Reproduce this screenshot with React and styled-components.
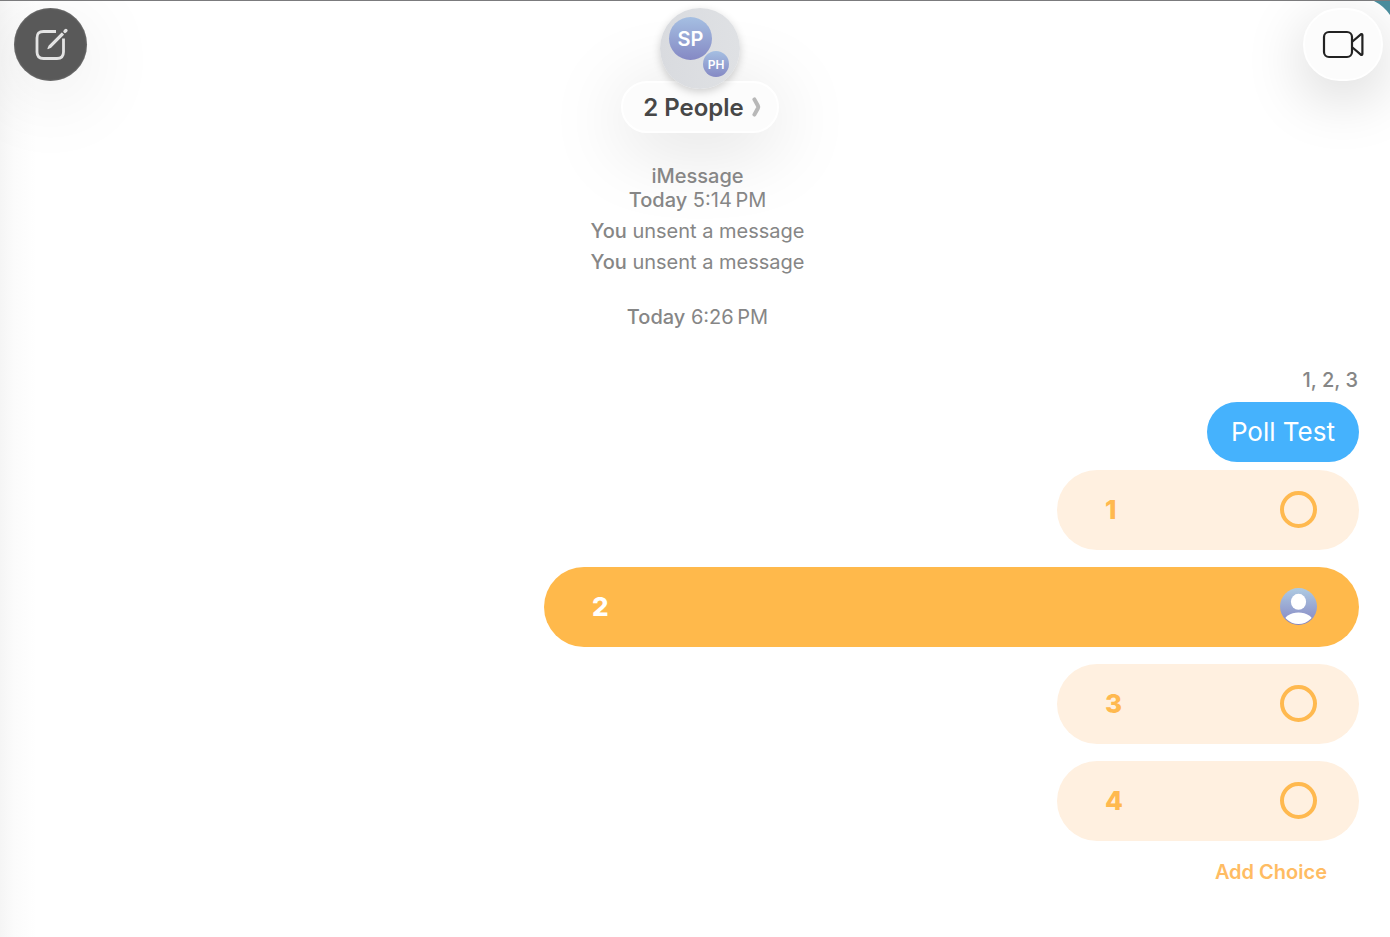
import { useState } from "react";
import styled, { createGlobalStyle } from "styled-components";

const GlobalStyle = createGlobalStyle`
  * {
    box-sizing: border-box;
  }

  body {
    margin: 0;
    background-color: #fff;
    font-family: Inter, "Liberation Sans", sans-serif;
  }

  button {
    font-family: inherit;
    border: none;
    padding: 0;
    cursor: pointer;
  }
`;

const Window = styled.div`
  position: relative;
  min-height: 100vh;
  overflow: hidden;
  border-top: 1px solid #7b7b7d;
  background: linear-gradient(to right, #f5f5f5, #fbfbfb 14px, #fff 36px);
`;

const Corner = styled.svg`
  position: absolute;
  top: 0;
  right: 0;
`;

const Header = styled.header`
  display: grid;
  grid-template-columns: 1fr auto 1fr;
  align-items: start;
  padding: 7px 4px 0 14px;
`;

const ComposeButton = styled.button`
  display: flex;
  justify-content: center;
  align-items: center;
  width: 73px;
  height: 73px;
  border-radius: 50%;
  background-color: #595959;
  box-shadow: inset 0 0 2px #8a8a8a, 0 16px 80px rgba(0, 0, 0, 0.1);
`;

const VideoButton = styled.button`
  display: flex;
  justify-content: center;
  align-items: center;
  justify-self: end;
  width: 80px;
  height: 73px;
  margin-right: 3px;
  border: 2px solid #fff;
  border-radius: 37px;
  background-color: #fcfcfc;
  box-shadow: 0 16px 60px rgba(0, 0, 0, 0.17);
`;

const Group = styled.div`
  display: flex;
  flex-direction: column;
  align-items: center;
`;

const GroupAvatar = styled.div`
  position: relative;
  z-index: 1;
  width: 80px;
  height: 81px;
  margin-bottom: -8px;
  border-radius: 50%;
  background: linear-gradient(to right, #d9dbdf, #dfe1e4);
  box-shadow: 0 3px 8px rgba(0, 0, 0, 0.18);
`;

const Initials = styled.span`
  position: absolute;
  top: ${({ $top }) => $top}px;
  left: ${({ $left }) => $left}px;
  display: flex;
  justify-content: center;
  align-items: center;
  width: ${({ $size }) => $size}px;
  height: ${({ $size }) => $size}px;
  border-radius: 50%;
  background: linear-gradient(#a5bfe2, #8589c4);
  color: #fff;
  font-size: ${({ $font }) => $font}px;
  font-weight: 600;
`;

const GroupName = styled.button`
  display: flex;
  justify-content: center;
  align-items: center;
  gap: 8px;
  height: 52px;
  padding: 0 16px 0 20px;
  border: 2px solid #fff;
  border-radius: 26px;
  background-color: #fcfcfc;
  box-shadow: 0 12px 80px rgba(0, 0, 0, 0.15);
  color: #474747;
  font-size: 24px;
  font-weight: 600;
`;

const Thread = styled.main`
  display: flex;
  flex-direction: column;
  align-items: flex-end;
  padding: 31px 31px 40px 36px;
`;

const Notice = styled.p`
  align-self: center;
  margin: ${({ $space }) => $space || 0}px 0 0;
  color: #868686;
  font-size: 20px;
  line-height: 24px;
  text-align: center;

  strong {
    font-weight: 500;
  }
`;

const Recipients = styled.p`
  margin: 39px 1px 0;
  color: #868686;
  font-size: 20px;
  font-weight: 500;
  line-height: 24px;
`;

const Bubble = styled.p`
  margin: 10px 0 0;
  padding: 0 24px;
  border-radius: 30px;
  background-color: #45b2fd;
  color: #fff;
  font-size: 26px;
  line-height: 60px;
`;

const Poll = styled.form`
  display: flex;
  flex-direction: column;
  align-items: flex-end;
  gap: 17px;
  width: 100%;
  margin-top: 8px;
`;

const Choice = styled.label`
  display: flex;
  justify-content: space-between;
  align-items: center;
  width: ${({ $checked }) => ($checked ? 815 : 302)}px;
  max-width: 100%;
  height: 80px;
  padding: 0 42px 1px 48px;
  border-radius: 40px;
  background-color: ${({ $checked }) => ($checked ? "#ffb94b" : "#fff0e0")};
  color: ${({ $checked }) => ($checked ? "#fff" : "#ffb94f")};
  font-size: 26px;
  font-weight: 800;
  cursor: pointer;
`;

const Mark = styled.span`
  display: grid;
  width: 37px;
  height: 37px;

  > * {
    grid-area: 1 / 1;
  }
`;

const Radio = styled.input`
  appearance: none;
  width: 37px;
  height: 37px;
  margin: 0;
  border: 4px solid #ffb94f;
  border-radius: 50%;
  cursor: pointer;

  &:checked {
    border: none;
  }
`;

const AddChoice = styled.button`
  margin: 19px 32px 0;
  background: none;
  color: #ffbc63;
  font-size: 20px;
  font-weight: 600;
  line-height: 24px;
`;

function ComposeIcon() {
  return (
    <svg width="36" height="36" viewBox="0 0 36 36" fill="none">
      <path
        d="M23 4.500H10.500C6 4.500 4 6.500 4 11V25C4 29.500 6 31.500 10.500 31.500H24C28.500 31.500 30.500 29.500 30.500 25V11.500"
        stroke="#e4e4e4"
        strokeWidth="2.800"
      />
      <path
        d="M15 21.500L16.400 18.600L28.800 6.200L30.300 7.700L17.900 20.100Z"
        fill="#e4e4e4"
        stroke="#e4e4e4"
        strokeWidth="1.200"
        strokeLinejoin="round"
      />
      <path
        d="M32 4.400L32.900 3.500"
        stroke="#e4e4e4"
        strokeWidth="3.400"
        strokeLinecap="round"
      />
    </svg>
  );
}

function VideoIcon() {
  return (
    <svg width="42" height="30" viewBox="0 0 42 30" fill="none">
      <g stroke="#222" strokeWidth="2.200" strokeLinejoin="round">
        <rect x="2" y="2" width="28" height="25" rx="5" />
        <path d="M30.500 11.500L38.800 4.300Q40.400 3.400 40.400 5.300V23.700Q40.400 25.600 38.800 24.700L30.500 17.500" />
      </g>
    </svg>
  );
}

function ChevronIcon() {
  return (
    <svg width="9" height="20" viewBox="0 0 9 20" fill="none">
      <path
        d="M2.400 2.400L5.900 8.800Q6.500 10 5.900 11.200L2.400 17.600"
        stroke="#b8b8b8"
        strokeWidth="4"
        strokeLinecap="round"
      />
    </svg>
  );
}

function PersonIcon() {
  return (
    <svg width="37" height="37" viewBox="0 0 37 37">
      <defs>
        <linearGradient id="person" x1="0" y1="0" x2="0" y2="1">
          <stop offset="0" stopColor="#aecbe2" />
          <stop offset="1" stopColor="#8585c3" />
        </linearGradient>
        <clipPath id="personClip">
          <circle cx="18.500" cy="18.500" r="17.500" />
        </clipPath>
      </defs>
      <circle cx="18.500" cy="18.500" r="18.500" fill="url(#person)" />
      <ellipse cx="18.500" cy="13.800" rx="7.600" ry="8" fill="#fff" />
      <ellipse
        cx="18.500"
        cy="35"
        rx="15"
        ry="10.500"
        fill="#fff"
        clipPath="url(#personClip)"
      />
    </svg>
  );
}

const choices = ["1", "2", "3", "4"];

function App() {
  const [vote, setVote] = useState("2");

  return (
    <>
      <GlobalStyle />
      <Window>
        <Corner width="16" height="15" viewBox="0 0 16 15" aria-hidden="true">
          <path d="M0 0Q10 5 16 14V0Z" fill="#4a8c9c" />
        </Corner>
        <Header>
          <ComposeButton type="button" aria-label="New message">
            <ComposeIcon />
          </ComposeButton>
          <Group>
            <GroupAvatar>
              <Initials $top={9} $left={9} $size={43} $font={20}>
                SP
              </Initials>
              <Initials $top={43} $left={43} $size={26} $font={12}>
                PH
              </Initials>
            </GroupAvatar>
            <GroupName type="button">
              2 People
              <ChevronIcon />
            </GroupName>
          </Group>
          <VideoButton type="button" aria-label="Start video call">
            <VideoIcon />
          </VideoButton>
        </Header>
        <Thread>
          <Notice>
            <strong>iMessage</strong>
            <br />
            <strong>Today</strong> 5:14{"\u202f"}PM
          </Notice>
          <Notice $space={7}>
            <strong>You</strong> unsent a message
          </Notice>
          <Notice $space={7}>
            <strong>You</strong> unsent a message
          </Notice>
          <Notice $space={31}>
            <strong>Today</strong> 6:26{"\u202f"}PM
          </Notice>
          <Recipients>1, 2, 3</Recipients>
          <Bubble>Poll Test</Bubble>
          <Poll>
            {choices.map((choice) => (
              <Choice key={choice} $checked={vote === choice}>
                {choice}
                <Mark>
                  <Radio
                    type="radio"
                    name="poll"
                    value={choice}
                    checked={vote === choice}
                    onChange={() => setVote(choice)}
                  />
                  {vote === choice && <PersonIcon />}
                </Mark>
              </Choice>
            ))}
          </Poll>
          <AddChoice type="button">Add Choice</AddChoice>
        </Thread>
      </Window>
    </>
  );
}

export default App;
